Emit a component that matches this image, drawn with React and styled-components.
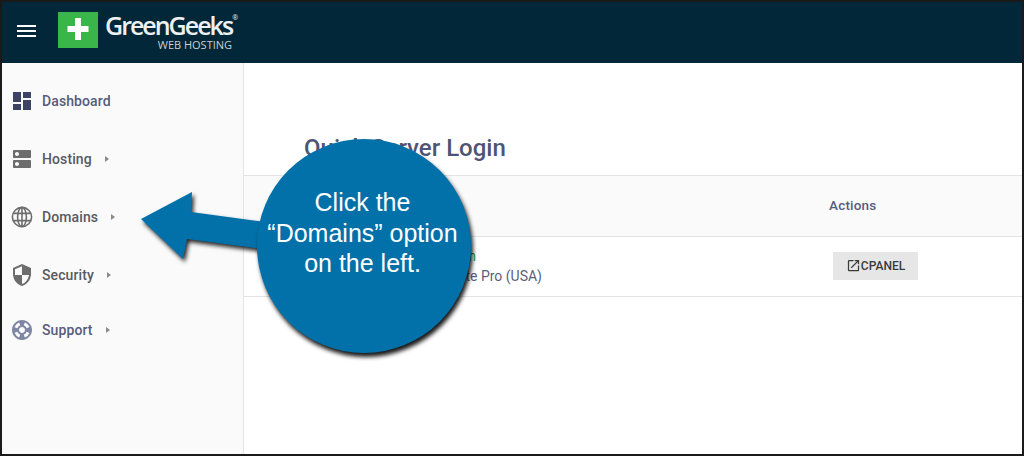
import React from "react";
import styled, { createGlobalStyle } from "styled-components";
import { MdDashboard, MdDns, MdSecurity, MdSupport, MdOpenInNew } from "react-icons/md";

const NAV_ITEMS = [
  { label: "Dashboard", icon: <MdDashboard />, color: "#3c4466", height: 58 },
  { label: "Hosting", icon: <MdDns />, color: "#6d6d6d", height: 58, arrow: true },
  { label: "Domains", icon: <GlobeIcon />, color: "#6d6d6d", height: 58, arrow: true },
  { label: "Security", icon: <MdSecurity />, color: "#6d6d6d", height: 58, arrow: true },
  { label: "Support", icon: <MdSupport />, color: "#7f86a3", height: 52, arrow: true }
];

function GlobeIcon() {
  return (
    <svg viewBox="0 0 24 24" fill="none" stroke="currentColor" strokeWidth="1.6">
      <circle cx="12" cy="12" r="9.6" />
      <ellipse cx="12" cy="12" rx="4.4" ry="9.6" />
      <path d="M12 2.4v19.2M3.4 8.4h17.2M3.4 15.6h17.2" />
    </svg>
  );
}

const App = () => (
  <Frame>
    <GlobalStyle />
    <TopBar>
      <Burger>
        <span />
        <span />
        <span />
      </Burger>
      <LogoMark>
        <svg viewBox="0 0 40 36" width="40" height="36">
          <path d="M17 6h6v8h7.5v6H23v8h-6v-8H9.5v-6H17z" fill="#fff" />
        </svg>
      </LogoMark>
      <LogoText>
        <LogoName>
          GreenGeeks<sup>®</sup>
        </LogoName>
        <LogoSub>WEB HOSTING</LogoSub>
      </LogoText>
    </TopBar>
    <Body>
      <Sidebar>
        {NAV_ITEMS.map(item => (
          <NavItem key={item.label} $height={item.height}>
            <NavIcon $color={item.color}>{item.icon}</NavIcon>
            <NavLabel $color={item.label === "Dashboard" || item.label === "Support" ? "#565c7a" : "#585a62"}>
              {item.label}
            </NavLabel>
            {item.arrow && <Caret />}
          </NavItem>
        ))}
      </Sidebar>
      <Main>
        <Title>Quick Server Login</Title>
        <Table>
          <HeadRow>
            <NameCol>Server</NameCol>
            <ActionCol>Actions</ActionCol>
          </HeadRow>
          <Row>
            <NameCol>
              <ServerInfo>
                <ServerName>greengeeks.com</ServerName>
                <ServerPlan>EcoSite Pro (USA)</ServerPlan>
              </ServerInfo>
            </NameCol>
            <ActionCol>
              <PanelButton>
                <MdOpenInNew />
                CPANEL
              </PanelButton>
            </ActionCol>
          </Row>
        </Table>
      </Main>
    </Body>
    <Arrow viewBox="0 0 130 80" width="130" height="80">
      <path d="M1 29 52 2 51 22 125 32 122 59 47 49 43 69z" fill="#0271aa" />
    </Arrow>
    <Bubble>
      Click the
      <br />
      “Domains” option
      <br />
      on the left.
    </Bubble>
  </Frame>
);

const GlobalStyle = createGlobalStyle`
  html, body {
    margin: 0;
    padding: 0;
    background: #fff;
    font-family: Roboto, "Liberation Sans", sans-serif;
  }
`;

const Frame = styled.div`
  position: relative;
  box-sizing: border-box;
  width: 1024px;
  height: 456px;
  border: 2px solid #1a1a1a;
  overflow: hidden;
  display: flex;
  flex-direction: column;
`;

const TopBar = styled.header`
  height: 61px;
  flex: none;
  background: #012738;
  display: flex;
  align-items: flex-start;
  padding: 10px 0 0 15px;
  box-sizing: border-box;
`;

const Burger = styled.div`
  width: 19px;
  display: flex;
  flex-direction: column;
  gap: 3px;
  margin: 13px 22px 0 0;

  span {
    display: block;
    height: 2px;
    background: #fff;
  }
`;

const LogoMark = styled.div`
  width: 40px;
  height: 36px;
  background: #39b54a;
  display: flex;
`;

const LogoText = styled.div`
  margin-left: 7px;
  display: flex;
  flex-direction: column;
  align-items: flex-end;
  color: #eef1f2;
`;

const LogoName = styled.div`
  font-family: "Open Sans", sans-serif;
  font-size: 25px;
  font-weight: 600;
  line-height: 27px;
  letter-spacing: -2px;
  position: relative;
  padding-right: 6px;

  sup {
    position: absolute;
    right: 0;
    top: 2px;
    font-size: 7px;
    font-weight: 400;
    line-height: 8px;
    letter-spacing: 0;
  }
`;

const LogoSub = styled.div`
  font-family: "Open Sans", sans-serif;
  font-size: 11px;
  line-height: 12px;
  color: #c9d0d4;
  margin-right: 6px;
`;

const Body = styled.div`
  flex: 1;
  display: flex;
  min-height: 0;
`;

const Sidebar = styled.nav`
  width: 242px;
  flex: none;
  box-sizing: border-box;
  background: #fafafa;
  border-right: 1px solid #e3e3e3;
  padding: 9px 0 0 8px;
`;

const NavItem = styled.div`
  height: ${p => p.$height}px;
  display: flex;
  align-items: center;
`;

const NavIcon = styled.span`
  width: 24px;
  height: 24px;
  color: ${p => p.$color};
  font-size: 24px;
  display: flex;

  svg {
    width: 24px;
    height: 24px;
  }
`;

const NavLabel = styled.span`
  margin-left: 8px;
  font-size: 14px;
  font-weight: 500;
  letter-spacing: 0.1px;
  color: ${p => p.$color};
`;

const Caret = styled.span`
  margin-left: 13px;
  width: 0;
  height: 0;
  border-left: 4px solid #8a8a8a;
  border-top: 3px solid transparent;
  border-bottom: 3px solid transparent;
`;

const Main = styled.main`
  flex: 1;
  display: flex;
  flex-direction: column;
  padding-top: 70px;
  background: #fff;
`;

const Title = styled.h1`
  margin: 0 0 0 60px;
  font-size: 24px;
  line-height: 30px;
  height: 42px;
  font-weight: 500;
  color: #4e5473;
`;

const Table = styled.div`
  border-top: 1px solid #e3e3e3;
`;

const HeadRow = styled.div`
  height: 58px;
  padding-bottom: 2px;
  background: #fafafa;
  border-bottom: 1px solid #e3e3e3;
  display: flex;
  align-items: center;
  font-size: 13.5px;
  font-weight: 500;
  letter-spacing: 0.2px;
  color: #565c7a;
`;

const Row = styled.div`
  height: 59px;
  border-bottom: 1px solid #e3e3e3;
  display: flex;
  align-items: center;
`;

const NameCol = styled.div`
  width: 585px;
  padding-left: 60px;
  box-sizing: border-box;
`;

const ServerInfo = styled.div`
  width: 238px;
  text-align: right;
`;

const ActionCol = styled.div`
  flex: 1;
`;

const ServerName = styled.div`
  font-size: 14px;
  line-height: 20px;
  color: #12b04c;
  padding-right: 66px;
`;

const ServerPlan = styled.div`
  font-size: 14px;
  line-height: 21px;
  color: #5a5f78;
`;

const PanelButton = styled.button`
  margin: -2px 0 0 4px;
  width: 85px;
  height: 28px;
  border: 0;
  padding: 0;
  background: #e6e6e6;
  color: #3a3a3a;
  font-family: inherit;
  font-size: 12px;
  font-weight: 500;
  display: flex;
  align-items: center;
  justify-content: center;

  svg {
    width: 15px;
    height: 15px;
  }
`;

const Arrow = styled.svg`
  position: absolute;
  left: 138px;
  top: 188px;
  filter: drop-shadow(2px 3px 2px rgba(0, 0, 0, 0.85));
`;

const Bubble = styled.div`
  position: absolute;
  left: 255px;
  top: 137px;
  width: 214px;
  height: 214px;
  box-sizing: border-box;
  padding: 48px 3px 0 0;
  border-radius: 50%;
  background: #0271aa;
  box-shadow: 2px 4px 4px rgba(0, 0, 0, 0.9);
  color: #fff;
  font-family: "Liberation Sans", Arial, sans-serif;
  font-size: 25px;
  line-height: 30.5px;
  text-align: center;
`;

export default App;
